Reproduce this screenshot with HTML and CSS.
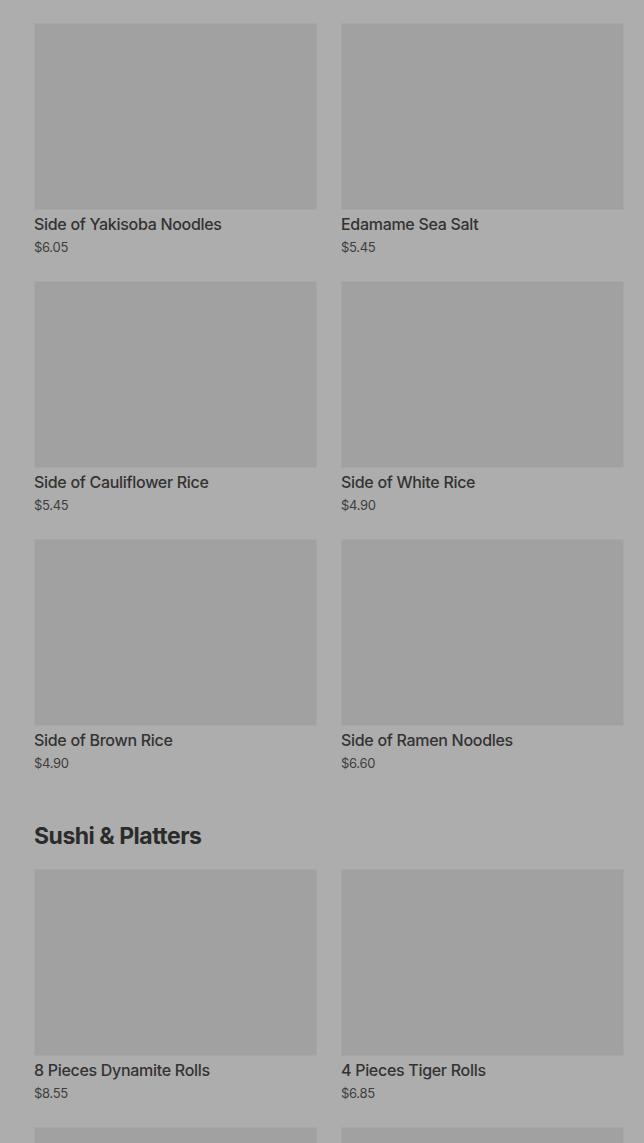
FILE: index.html
```html
<!DOCTYPE html>
<html lang="en">
<head>
  <meta charset="UTF-8">
  <meta name="viewport" content="width=device-width, initial-scale=1.0">
  <title>Menu</title>
  <link rel="stylesheet" href="styles.css">
</head>
<body>
  <div class="menu">
    <section class="section">
      <div class="grid">
        <div class="item">
          <div class="thumb"></div>
          <div class="name">Side of Yakisoba Noodles</div>
          <div class="price">$6.05</div>
        </div>
        <div class="item">
          <div class="thumb"></div>
          <div class="name">Edamame Sea Salt</div>
          <div class="price">$5.45</div>
        </div>
        <div class="item">
          <div class="thumb"></div>
          <div class="name">Side of Cauliflower Rice</div>
          <div class="price">$5.45</div>
        </div>
        <div class="item">
          <div class="thumb"></div>
          <div class="name">Side of White Rice</div>
          <div class="price">$4.90</div>
        </div>
        <div class="item">
          <div class="thumb"></div>
          <div class="name">Side of Brown Rice</div>
          <div class="price">$4.90</div>
        </div>
        <div class="item">
          <div class="thumb"></div>
          <div class="name">Side of Ramen Noodles</div>
          <div class="price">$6.60</div>
        </div>
      </div>
    </section>

    <section class="section">
      <h2 class="section-title">Sushi &amp; Platters</h2>
      <div class="grid">
        <div class="item">
          <div class="thumb"></div>
          <div class="name">8 Pieces Dynamite Rolls</div>
          <div class="price">$8.55</div>
        </div>
        <div class="item">
          <div class="thumb"></div>
          <div class="name">4 Pieces Tiger Rolls</div>
          <div class="price">$6.85</div>
        </div>
        <div class="item">
          <div class="thumb"></div>
          <div class="name"></div>
          <div class="price"></div>
        </div>
        <div class="item">
          <div class="thumb"></div>
          <div class="name"></div>
          <div class="price"></div>
        </div>
      </div>
    </section>
  </div>
</body>
</html>
```

FILE: styles.css
```css
html, body {
  margin: 0;
  padding: 0;
}
body {
  font-family: Inter, "Liberation Sans", Arial, sans-serif;
  background-color: #adadad;
  color: #2e2e2e;
  overflow: hidden;
  height: 1143px;
}
.menu {
  padding: 23px 20px 0 34px;
}
.section {
  margin-bottom: 49px;
}
.section-title {
  margin: 0 0 19px;
  font-size: 23px;
  line-height: 28px;
  font-weight: 700;
  letter-spacing: -0.5px;
  color: #2b2b2b;
}
.grid {
  display: grid;
  grid-template-columns: 283px 283px;
  column-gap: 24px;
  row-gap: 24px;
}
.thumb {
  height: 185px;
  background-color: #a1a1a1;
  border: 1px solid #a7a7a7;
}
.name {
  margin-top: 4px;
  font-size: 16px;
  line-height: 20px;
  font-weight: 500;
  letter-spacing: -0.3px;
  color: #333;
}
.price {
  margin-top: 3px;
  font-size: 13px;
  line-height: 20px;
  letter-spacing: -0.3px;
  color: #3e3e3e;
}
```
